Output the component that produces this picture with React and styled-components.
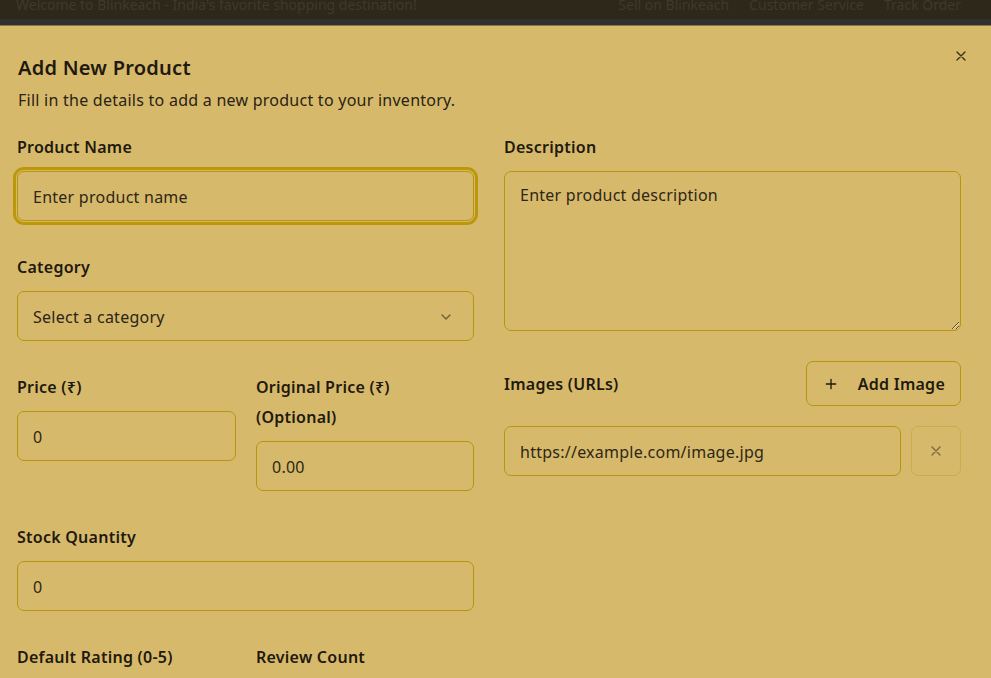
import React from "react";
import styled, { createGlobalStyle } from "styled-components";

const Global = createGlobalStyle`
  html, body { margin: 0; padding: 0; height: 100%; overflow: hidden; background: #d7b96c; }
  body { font-family: "Noto Sans", "Open Sans", sans-serif; letter-spacing: 0.25px; }
  * { box-sizing: border-box; }
`;

const Page = styled.div`
  display: flex;
  flex-direction: column;
  height: 678px;
  overflow: hidden;
`;

const TopBar = styled.div`
  flex: none;
  height: 19px;
  background: #2d281a;
  display: flex;
  justify-content: space-between;
  padding: 0 30px 0 16px;
  overflow: hidden;
  font-size: 14px;
  line-height: 16px;
  letter-spacing: 0;
  color: #3e3a2c;
`;

const TopText = styled.span`
  margin-top: -3px;
`;

const TopLinks = styled.div`
  display: flex;
  gap: 20px;
  margin-top: -3px;
`;

const Strip = styled.div`
  flex: none;
  height: 7px;
  background: #313030;
  border-bottom: 1px solid #8a7440;
`;

const Dialog = styled.div`
  position: relative;
  flex: none;
  background: #d7b96c;
  padding: 28px 30px 0 17px;
  color: #1f1a0e;
`;

const CloseBtn = styled.button`
  position: absolute;
  top: 22px;
  right: 22px;
  width: 16px;
  height: 16px;
  padding: 0;
  border: none;
  background: none;
  color: #3b321b;
  display: flex;
`;

const Title = styled.h2`
  margin: 0 0 0 1px;
  font-size: 20px;
  line-height: 28px;
  font-weight: 600;
  color: #1e1a0f;
`;

const Subtitle = styled.p`
  margin: 6px 0 0 1px;
  font-size: 16px;
  line-height: 24px;
  color: #2a2313;
`;

const FormGrid = styled.div`
  margin-top: 20px;
  display: grid;
  grid-template-columns: 457px 457px;
  column-gap: 30px;
  align-items: start;
`;

const Column = styled.div`
  display: flex;
  flex-direction: column;
  gap: ${(p) => p.$gap || 31}px;
`;

const Field = styled.div`
  display: flex;
  flex-direction: column;
  gap: 9px;
`;

const Pair = styled.div`
  display: grid;
  grid-template-columns: 219px 218px;
  column-gap: 20px;
  align-items: start;
`;

const Label = styled.label`
  font-size: 16px;
  line-height: 30px;
  font-weight: 600;
  color: #1f1a0e;
`;

const baseBox = `
  width: 100%;
  height: 50px;
  border: 1px solid #b8950f;
  border-radius: 7px;
  background: transparent;
  font-family: "Noto Sans", "Open Sans", sans-serif;
  letter-spacing: 0.25px;
  font-size: 16px;
  color: #2b2414;
  padding: 1px 15px 0;
  outline: none;
`;

const Input = styled.input`
  ${baseBox}
  box-shadow: ${(p) =>
    p.$focused ? "0 0 0 1px #d7b96c, 0 0 0 4px #bd970a" : "none"};
  &::placeholder { color: #2e2715; opacity: 1; }
`;

const SelectBox = styled.div`
  ${baseBox}
  display: flex;
  align-items: center;
  justify-content: space-between;
  padding: 1px 19px 0 15px;
`;

const TextArea = styled.textarea`
  ${baseBox}
  height: 160px;
  padding: 11px 15px;
  line-height: 24px;
  resize: vertical;
  &::placeholder { color: #2e2715; opacity: 1; }
`;

const ImagesHead = styled.div`
  display: flex;
  align-items: center;
  justify-content: space-between;
  height: 45px;
`;

const AddButton = styled.button`
  height: 45px;
  padding: 0 15px 0 16px;
  display: flex;
  align-items: center;
  gap: 19px;
  border: 1px solid #b8950f;
  border-radius: 7px;
  background: transparent;
  font-family: "Noto Sans", "Open Sans", sans-serif;
  letter-spacing: 0.25px;
  font-size: 16px;
  font-weight: 600;
  color: #1f1a0e;
`;

const UrlRow = styled.div`
  display: flex;
  gap: 10px;
  margin-top: 20px;
`;

const RemoveBtn = styled.button`
  flex: none;
  width: 50px;
  height: 50px;
  border: 1px solid rgba(184, 149, 15, 0.35);
  border-radius: 7px;
  background: transparent;
  color: #7d6a3c;
  display: flex;
  align-items: center;
  justify-content: center;
  padding: 0;
`;

const X = ({ size = 16, sw = 2 }) => (
  <svg width={size} height={size} viewBox="0 0 24 24" fill="none" stroke="currentColor" strokeWidth={sw} strokeLinecap="round">
    <path d="M18 6 6 18M6 6l12 12" />
  </svg>
);

const Plus = () => (
  <svg width="16" height="16" viewBox="0 0 24 24" fill="none" stroke="currentColor" strokeWidth="2" strokeLinecap="round">
    <path d="M5 12h14M12 5v14" />
  </svg>
);

const Chevron = () => (
  <svg width="16" height="16" viewBox="0 0 24 24" fill="none" stroke="#6f5f37" strokeWidth="2" strokeLinecap="round" strokeLinejoin="round">
    <path d="m6 9 6 6 6-6" />
  </svg>
);

export default function App() {
  return (
    <Page>
      <Global />
      <TopBar>
        <TopText>Welcome to Blinkeach - India's favorite shopping destination!</TopText>
        <TopLinks>
          <span>Sell on Blinkeach</span>
          <span>Customer Service</span>
          <span>Track Order</span>
        </TopLinks>
      </TopBar>
      <Strip />
      <Dialog>
        <CloseBtn aria-label="Close"><X /></CloseBtn>
        <Title>Add New Product</Title>
        <Subtitle>Fill in the details to add a new product to your inventory.</Subtitle>
        <FormGrid>
          <Column>
            <Field>
              <Label>Product Name</Label>
              <Input $focused placeholder="Enter product name" />
            </Field>
            <Field>
              <Label>Category</Label>
              <SelectBox>
                <span>Select a category</span>
                <Chevron />
              </SelectBox>
            </Field>
            <Pair>
              <Field>
                <Label>Price (₹)</Label>
                <Input placeholder="0" />
              </Field>
              <Field>
                <Label>Original Price (₹) (Optional)</Label>
                <Input placeholder="0.00" />
              </Field>
            </Pair>
            <Field>
              <Label>Stock Quantity</Label>
              <Input placeholder="0" />
            </Field>
            <Pair>
              <Field>
                <Label>Default Rating (0-5)</Label>
                <Input placeholder="4.5" />
              </Field>
              <Field>
                <Label>Review Count</Label>
                <Input placeholder="0" />
              </Field>
            </Pair>
          </Column>
          <Column $gap={30}>
            <Field>
              <Label>Description</Label>
              <TextArea placeholder="Enter product description" />
            </Field>
            <div>
              <ImagesHead>
                <Label>Images (URLs)</Label>
                <AddButton><Plus />Add Image</AddButton>
              </ImagesHead>
              <UrlRow>
                <Input placeholder="https://example.com/image.jpg" />
                <RemoveBtn aria-label="Remove"><X /></RemoveBtn>
              </UrlRow>
            </div>
          </Column>
        </FormGrid>
      </Dialog>
    </Page>
  );
}
